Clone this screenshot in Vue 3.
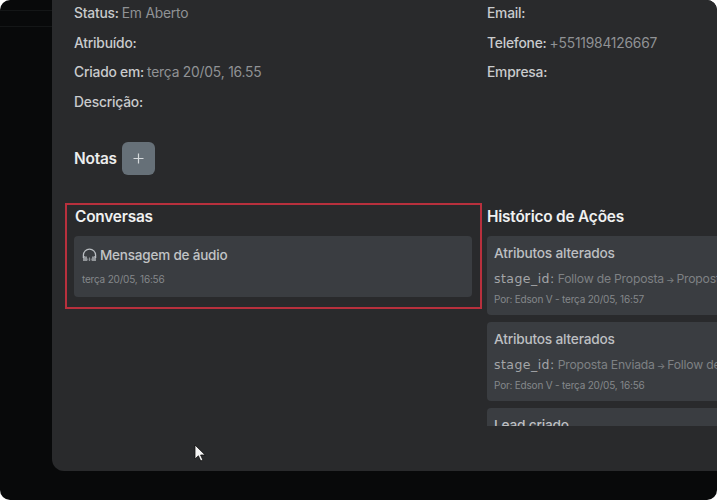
<template>
  <div class="screen">
    <div class="backdrop-line line-a"></div>
    <div class="backdrop-line line-b"></div>

    <div class="modal">
      <div class="info">
        <div class="info-col">
          <p v-for="row in leftRows" :key="row.label" class="info-row">
            <span class="label">{{ row.label }}:</span>
            <span v-if="row.value" class="value">{{ row.value }}</span>
          </p>
        </div>
        <div class="info-col">
          <p v-for="row in rightRows" :key="row.label" class="info-row">
            <span class="label">{{ row.label }}:</span>
            <span v-if="row.value" class="value">{{ row.value }}</span>
          </p>
        </div>
      </div>

      <div class="notes">
        <span class="notes-title">Notas</span>
        <button class="add-btn" type="button">
          <svg width="11" height="11" viewBox="0 0 11 11">
            <path d="M5.5 0.5v10M0.5 5.5h10" stroke="#d5d9dc" stroke-width="1.2" fill="none" />
          </svg>
        </button>
      </div>

      <div class="columns">
        <section class="conversas">
          <h3 class="section-title">Conversas</h3>
          <div class="card audio-card">
            <div class="audio-title">
              <svg class="headset" width="15" height="14" viewBox="0 0 15 14">
                <path d="M1.4 10V7.2a6.1 6.1 0 0 1 12.2 0V10" stroke="#b9bdc1" stroke-width="1.3" fill="none" />
                <path d="M2 8v5M4 8.5v4.5M11 8.5V13M13 8v5" stroke="#b9bdc1" stroke-width="1.4" fill="none" />
                <path d="M5.8 10.5v2M7.5 9.5v3.5M9.2 10.5v2" stroke="#8d9296" stroke-width="1" fill="none" />
              </svg>
              <span>Mensagem de áudio</span>
            </div>
            <div class="meta">terça 20/05, 16:56</div>
          </div>
        </section>

        <section class="historico">
          <h3 class="section-title">Histórico de Ações</h3>
          <div class="history-list">
            <div v-for="item in history" :key="item.title + item.meta" class="card history-card">
              <div class="history-title">{{ item.title }}</div>
              <div v-if="item.from" class="history-change">
                <span class="field">stage_id:</span>
                <span class="change-text">{{ item.from }}<span class="arrow">→</span>{{ item.to }}</span>
              </div>
              <div v-if="item.meta" class="meta">{{ item.meta }}</div>
            </div>
          </div>
        </section>
      </div>
    </div>

    <svg class="cursor" width="12" height="18" viewBox="0 0 12 18">
      <path d="M1 1v14l3.4-3.2 2.3 5.2 2.2-1-2.3-5h4.6z" fill="#f4f4f4" stroke="#111" stroke-width="0.8" />
    </svg>
  </div>
</template>

<script setup>
const leftRows = [
  { label: 'Status', value: 'Em Aberto' },
  { label: 'Atribuído' },
  { label: 'Criado em', value: 'terça 20/05, 16.55' },
  { label: 'Descrição' }
]

const rightRows = [
  { label: 'Email' },
  { label: 'Telefone', value: '+5511984126667' },
  { label: 'Empresa' }
]

const history = [
  {
    title: 'Atributos alterados',
    from: 'Follow de Proposta',
    to: 'Proposta Enviada',
    meta: 'Por: Edson V - terça 20/05, 16:57'
  },
  {
    title: 'Atributos alterados',
    from: 'Proposta Enviada',
    to: 'Follow de Proposta',
    meta: 'Por: Edson V - terça 20/05, 16:56'
  },
  {
    title: 'Lead criado'
  }
]
</script>

<style>
html,
body {
  margin: 0;
  background: #fff;
}
</style>

<style scoped>
.screen {
  position: relative;
  width: 717px;
  height: 500px;
  overflow: hidden;
  border-radius: 10px;
  background: #08090a;
  font-family: Inter, "Liberation Sans", sans-serif;
  letter-spacing: -0.2px;
}

.backdrop-line {
  position: absolute;
  left: 0;
  width: 52px;
  height: 1px;
  background: #141617;
}

.line-a {
  top: 10px;
}

.line-b {
  top: 26px;
}

.modal {
  width: 700px;
  height: 471px;
  margin-left: 52px;
  padding: 0 0 0 22px;
  box-sizing: border-box;
  overflow: hidden;
  border-radius: 0 0 0 12px;
  background: #292a2c;
}

.info {
  display: grid;
  grid-template-columns: 413px 1fr;
  height: 128px;
}

.info-col {
  display: flex;
  flex-direction: column;
  gap: 11.5px;
  padding-top: 4px;
}

.info-row {
  margin: 0;
  height: 18px;
  font-size: 13.8px;
  line-height: 18px;
  white-space: nowrap;
}

.label {
  color: #c9cbcd;
  font-weight: 500;
}

.value {
  margin-left: 3px;
  color: #909295;
}

.notes {
  display: flex;
  align-items: center;
  gap: 5px;
  height: 33px;
  margin-top: 14px;
}

.notes-title {
  color: #eceded;
  font-size: 15.4px;
  font-weight: 600;
}

.add-btn {
  display: flex;
  align-items: center;
  justify-content: center;
  width: 33px;
  height: 33px;
  padding: 0;
  border: 0;
  border-radius: 6px;
  background: #667078;
}

.columns {
  display: flex;
  margin-top: 28px;
  margin-left: -9px;
}

.conversas {
  width: 417px;
  height: 106px;
  padding: 3px 8px 0;
  box-sizing: border-box;
  border: 2px solid #b8303d;
}

.historico {
  flex: 1;
  margin-left: 5px;
  padding-top: 5px;
  min-width: 0;
}

.section-title {
  margin: 0 0 10px;
  height: 18px;
  color: #f0f1f1;
  font-size: 15.4px;
  font-weight: 600;
  line-height: 18px;
}

.card {
  border-radius: 4px;
  background: #3a3d41;
}

.audio-card {
  width: 398px;
  height: 61px;
  margin-left: -1px;
  padding: 10px 8px 0;
  box-sizing: border-box;
}

.audio-title {
  display: flex;
  align-items: center;
  gap: 3px;
  color: #c2c4c6;
  font-size: 13.5px;
  font-weight: 500;
  line-height: 18px;
}

.meta {
  margin-top: 9px;
  color: #85888b;
  font-size: 10px;
  line-height: 12px;
  white-space: nowrap;
}

.history-list {
  display: flex;
  flex-direction: column;
  gap: 7px;
  height: 190px;
  overflow: hidden;
}

.history-card {
  flex: none;
  height: 79px;
  padding: 9px 7px 0;
  box-sizing: border-box;
  white-space: nowrap;
  overflow: hidden;
}

.history-title {
  color: #bdbfc1;
  font-size: 13.7px;
  font-weight: 500;
  line-height: 16px;
}

.history-change {
  margin-top: 7px;
  line-height: 18px;
}

.field {
  color: #a3a5a8;
  font-family: "DejaVu Sans", sans-serif;
  font-size: 12.5px;
  letter-spacing: 0.45px;
}

.change-text {
  margin-left: 3px;
  color: #7e8184;
  font-size: 12.2px;
}

.arrow {
  margin: 0 2px;
  font-size: 9px;
}

.history-card .meta {
  margin-top: 4px;
}

.cursor {
  position: absolute;
  left: 194px;
  top: 444px;
}
</style>
